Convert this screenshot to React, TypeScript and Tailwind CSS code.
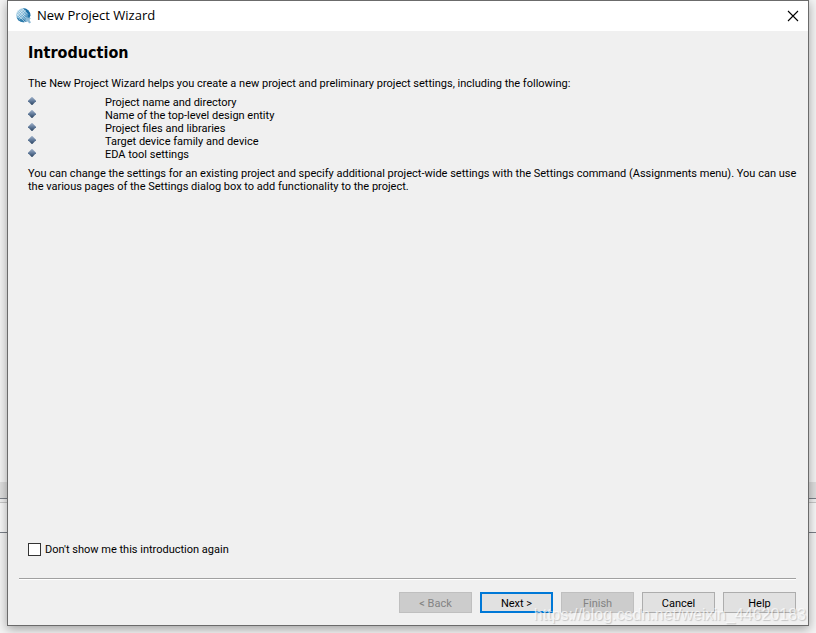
import { useState } from "react";

const topics = [
  "Project name and directory",
  "Name of the top-level design entity",
  "Project files and libraries",
  "Target device family and device",
  "EDA tool settings",
];

function AppIcon() {
  return (
    <svg width="16" height="16" viewBox="0 0 16 16" aria-hidden="true">
      <defs>
        <linearGradient id="globe" x1="0" y1="0" x2="1" y2="1">
          <stop offset="0" stopColor="#c3dfec" />
          <stop offset="0.5" stopColor="#6aaad0" />
          <stop offset="1" stopColor="#2b74a6" />
        </linearGradient>
        <clipPath id="globeClip">
          <circle cx="7.3" cy="7.3" r="7" />
        </clipPath>
      </defs>
      <circle cx="7.3" cy="7.3" r="7" fill="url(#globe)" />
      <path d="M7 0.3 A7 7 0 0 1 14.3 8 L12.5 10 Q12 4.5 7 0.3Z" fill="#1d6fa5" />
      <path d="M0.6 9.5 Q5 12.5 10 11 L8.5 14.3 Q3 14.5 0.6 9.5Z" fill="#2f7cab" />
      <g clipPath="url(#globeClip)" fill="none" stroke="#ffffff" strokeOpacity="0.75" strokeWidth="0.7">
        <path d="M0 5 L9 14 M0 2.5 L11 13.5 M2 2 L13 13 M4 1.5 L10 7.5 M6.5 1 L12 6.5" />
        <path d="M1 8 L8 1 M2 10 L10 2 M3 12 L9 6" strokeOpacity="0.5" />
      </g>
      <path d="M9.5 9 L12.5 9.8 L14.8 10 L13.5 12 L15 14.5 L13 15.5 L12 13.5 L10 14Z" fill="#8fbad5" />
    </svg>
  );
}

function Diamond() {
  return (
    <svg width="8" height="8" viewBox="0 0 8 8" aria-hidden="true">
      <defs>
        <linearGradient id="gem" x1="0" y1="0" x2="0" y2="1">
          <stop offset="0" stopColor="#a3b4cc" />
          <stop offset="0.5" stopColor="#627b9b" />
          <stop offset="1" stopColor="#263f5c" />
        </linearGradient>
      </defs>
      <path d="M4 -0.3 L8.3 4 L4 8.3 L-0.3 4Z" fill="url(#gem)" />
    </svg>
  );
}

// The main window that shows round the edges of the dialog
function Backdrop() {
  return (
    <div className="absolute inset-0 flex flex-col bg-[#f4f4f4]" aria-hidden="true">
      <div className="flex-1" />
      <div className="h-4 bg-[#dedede]" />
      <div className="h-1 border-t border-[#7a7f87] bg-[#f0f0f0]" />
      <div className="h-[30px] border-t border-[#c8c8c8] bg-[#f8f8f8]" />
      <div className="h-[101px] border-t border-[#7a7f87]" />
    </div>
  );
}

const button = "h-[21px] w-[73px] border pt-px text-center leading-[19px]";
const normal = "border-[#adadad] bg-[#e1e1e1]";
const disabled = "border-[#bfbfbf] bg-[#cccccc] text-[#838383]";

export default function App() {
  const [hidden, setHidden] = useState(false);

  return (
    <div className="relative flex min-h-screen flex-col overflow-hidden px-[7px] pb-[7px] font-['Roboto','DejaVu_Sans',sans-serif] text-[11px] leading-[13px] text-black">
      <Backdrop />

      <div
        role="dialog"
        aria-labelledby="dialog-title"
        className="relative flex flex-1 flex-col border border-[#6b6b6b] bg-[#f0f0f0] shadow-[0_3px_10px_rgba(0,0,0,0.35)]"
      >
        <header className="flex h-[30px] items-center bg-white pl-2 pr-[7px] pb-px">
          <AppIcon />
          <h1 id="dialog-title" className="ml-[5px] flex-1 font-['Open_Sans',sans-serif] text-[13px]">
            New Project Wizard
          </h1>
          <button type="button" aria-label="Close" className="flex size-4 items-center justify-center">
            <svg width="12" height="12" viewBox="0 0 12 12" fill="none" stroke="#000" strokeWidth="1.1">
              <path d="M1 1 L11 11 M11 1 L1 11" />
            </svg>
          </button>
        </header>

        <main className="flex flex-1 flex-col pl-5 pr-2 pt-3">
          <h2 className="font-['DejaVu_Sans_Condensed','DejaVu_Sans',sans-serif] text-[16px] font-bold leading-5">
            Introduction
          </h2>
          <p className="mt-[14px]">
            The New Project Wizard helps you create a new project and preliminary project settings, including the
            following:
          </p>
          <ul className="mt-[6px]">
            {topics.map((topic) => (
              <li key={topic} className="flex">
                <span className="w-[77px] pt-px">
                  <Diamond />
                </span>
                {topic}
              </li>
            ))}
          </ul>
          <p className="mt-[6px]">
            You can change the settings for an existing project and specify additional project-wide settings with the
            Settings command (Assignments menu). You can use the various pages of the Settings dialog box to add
            functionality to the project.
          </p>
          <label className="mt-auto flex items-center gap-1 self-start pb-[22px]">
            <input
              type="checkbox"
              checked={hidden}
              onChange={(e) => setHidden(e.target.checked)}
              className="size-[13px] appearance-none border border-[#333333] bg-white checked:bg-[#0078d7]"
            />
            Don't show me this introduction again
          </label>
        </main>

        <footer className="ml-[11px] mr-3 flex justify-end gap-2 border-t border-[#a0a0a0] pb-3 pt-[13px] shadow-[inset_0_1px_0_#ffffff]">
          <button type="button" disabled className={`${button} ${disabled}`}>
            &lt; Back
          </button>
          <button type="button" className="h-[21px] w-[73px] border-2 border-[#0078d7] bg-[#e1e1e1] pt-px text-center leading-[17px]">
            Next &gt;
          </button>
          <button type="button" disabled className={`${button} ${disabled}`}>
            Finish
          </button>
          <button type="button" className={`${button} ${normal}`}>
            Cancel
          </button>
          <button type="button" className={`${button} ${normal}`}>
            Help
          </button>
        </footer>
      </div>

      <span className="pointer-events-none absolute bottom-2 right-[10px] font-['Liberation_Sans',sans-serif] text-[16px] leading-5 text-white/70 [text-shadow:1px_1px_1px_rgba(0,0,0,0.18)]">
        https://blog.csdn.net/weixin_44620183
      </span>
    </div>
  );
}
